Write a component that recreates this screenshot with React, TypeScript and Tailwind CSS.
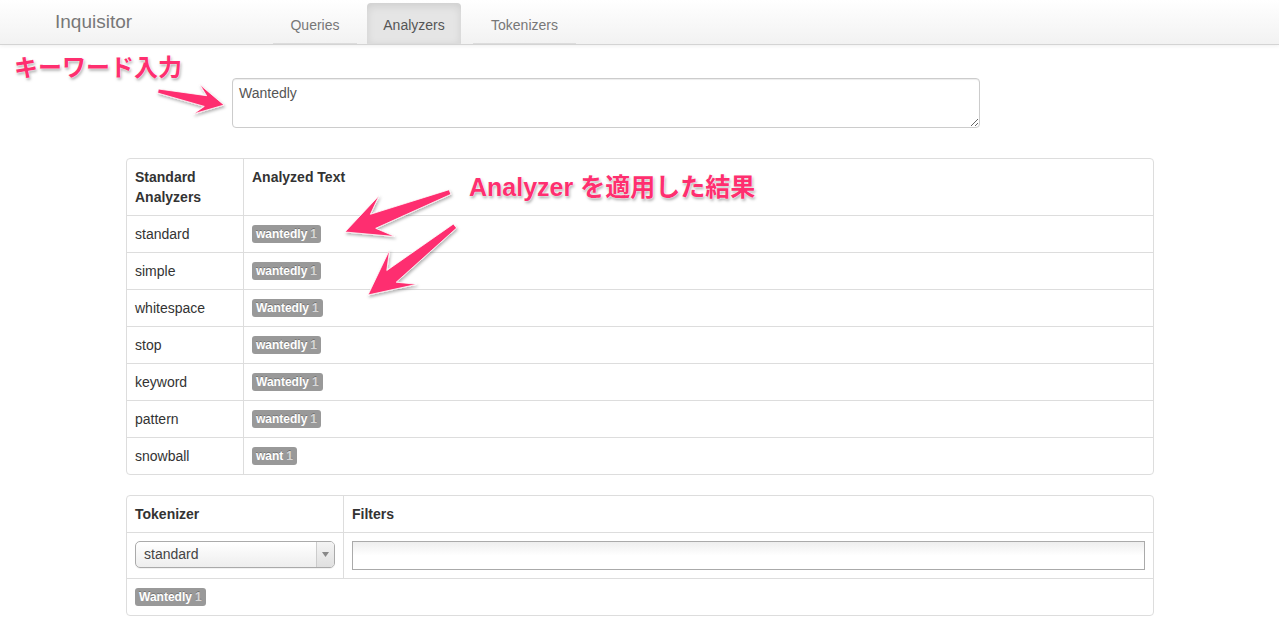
import React from "react";

const PINK = "#fe2f6f";

function arrowPoints(
  x1: number,
  y1: number,
  x2: number,
  y2: number,
  hl: number,
  hw: number,
  nb: number,
  sw: number,
  tw: number
) {
  const dx = x2 - x1;
  const dy = y2 - y1;
  const L = Math.hypot(dx, dy);
  const ux = dx / L;
  const uy = dy / L;
  const nx = -uy;
  const ny = ux;
  const p = (a: number, b: number) =>
    `${(x1 + ux * a + nx * b).toFixed(1)},${(y1 + uy * a + ny * b).toFixed(1)}`;
  return [
    p(0, -tw),
    p(L - nb, -sw),
    p(L - hl, -hw),
    p(L, 0),
    p(L - hl, hw),
    p(L - nb, sw),
    p(0, tw),
  ].join(" ");
}

function Label({ text }: { text: string }) {
  return (
    <span className="inline-flex items-center h-[18px] px-[4px] rounded-[3px] bg-[#999999] text-white font-bold text-[12px] leading-[14px] [text-shadow:0_-1px_0_rgba(0,0,0,0.25)]">
      {text}
      <span className="ml-[3px] text-[#d6d6d6]">1</span>
    </span>
  );
}

const rows: [string, string][] = [
  ["standard", "wantedly"],
  ["simple", "wantedly"],
  ["whitespace", "Wantedly"],
  ["stop", "wantedly"],
  ["keyword", "Wantedly"],
  ["pattern", "wantedly"],
  ["snowball", "want"],
];

export default function App() {
  return (
    <div className="relative min-h-[631px] bg-white text-[#333333] font-['Liberation_Sans','Noto_Sans_CJK_JP',sans-serif] text-[14px] leading-[20px]">
      {/* Navbar */}
      <div className="h-[45px] border-b border-[#d4d4d4] bg-gradient-to-b from-white to-[#f2f2f2] shadow-[0_1px_4px_rgba(0,0,0,0.065)] flex items-start pl-[55px]">
        <div className="w-[218px] mt-[12px] text-[19px] leading-[20px] text-[#777777]">
          Inquisitor
        </div>
        <div className="flex items-start">
          <div className="mt-[3px] h-[41px] w-[84px] pt-[12px] text-center text-[#777777] border-b border-[#dcdcdc] mr-[10px]">
            Queries
          </div>
          <div className="mt-[3px] h-[41px] w-[94px] pt-[12px] text-center text-[#555555] bg-[#e5e5e5] rounded-t-[4px] shadow-[inset_0_3px_8px_rgba(0,0,0,0.1)] border-b border-[#dcdcdc] mr-[12px]">
            Analyzers
          </div>
          <div className="mt-[3px] h-[41px] w-[103px] pt-[12px] text-center text-[#777777] border-b border-[#dcdcdc]">
            Tokenizers
          </div>
        </div>
      </div>

      {/* Keyword textarea */}
      <textarea
        defaultValue="Wantedly"
        className="block mt-[33px] ml-[232px] w-[748px] h-[50px] border border-[#cccccc] rounded-[4px] shadow-[inset_0_1px_1px_rgba(0,0,0,0.075)] px-[6px] py-[4px] text-[14px] leading-[20px] text-[#555555] outline-none font-['Liberation_Sans',sans-serif]"
      />

      {/* Standard analyzers table */}
      <div className="mt-[30px] ml-[126px] w-[1028px] border border-[#dddddd] rounded-[4px]">
        <div className="flex font-bold">
          <div className="w-[116px] p-2">Standard Analyzers</div>
          <div className="flex-1 border-l border-[#dddddd] p-2">Analyzed Text</div>
        </div>
        {rows.map(([name, tok]) => (
          <div key={name} className="flex border-t border-[#dddddd]">
            <div className="w-[116px] p-2">{name}</div>
            <div className="flex-1 border-l border-[#dddddd] px-2 py-2 flex items-center">
              <Label text={tok} />
            </div>
          </div>
        ))}
      </div>

      {/* Custom tokenizer table */}
      <div className="mt-[20px] ml-[126px] w-[1028px] border border-[#dddddd] rounded-[4px]">
        <div className="flex font-bold">
          <div className="w-[216px] p-2">Tokenizer</div>
          <div className="flex-1 border-l border-[#dddddd] p-2">Filters</div>
        </div>
        <div className="flex border-t border-[#dddddd]">
          <div className="w-[216px] p-2">
            <div className="flex h-[27px] w-full border border-[#aaaaaa] rounded-[5px] bg-gradient-to-b from-white to-[#eeeeee] overflow-hidden shadow-[0_1px_0_rgba(0,0,0,0.05)]">
              <div className="flex-1 pl-[8px] leading-[25px] text-[#444444]">standard</div>
              <div className="w-[18px] border-l border-[#cccccc] bg-gradient-to-b from-[#f4f4f4] to-[#e0e0e0] flex items-center justify-center">
                <svg width="7" height="5" viewBox="0 0 7 5">
                  <polygon points="0,0 7,0 3.5,5" fill="#888888" />
                </svg>
              </div>
            </div>
          </div>
          <div className="flex-1 border-l border-[#dddddd] p-2">
            <div className="h-[29px] w-full border border-[#aaaaaa] bg-gradient-to-b from-[#eeeeee] via-white to-white" />
          </div>
        </div>
        <div className="border-t border-[#dddddd] px-2 py-2 flex items-center h-[37px]">
          <Label text="Wantedly" />
        </div>
      </div>

      {/* Annotations */}
      <svg className="absolute left-0 top-0 pointer-events-none" width="1279" height="631">
        <defs>
          <filter id="sh" x="-20%" y="-20%" width="140%" height="140%">
            <feDropShadow dx="1" dy="2" stdDeviation="1.5" floodColor="#000000" floodOpacity="0.3" />
          </filter>
        </defs>
        <polygon
          points={arrowPoints(158, 91, 224, 105, 28, 15, 19, 5.5, 2)}
          fill={PINK}
          stroke="#ffffff"
          strokeWidth="0.8"
          strokeLinejoin="round"
          filter="url(#sh)"
        />
        <polygon
          points={arrowPoints(450, 192, 345, 232, 45, 22, 30, 7.5, 2.5)}
          fill={PINK}
          stroke="#ffffff"
          strokeWidth="0.8"
          strokeLinejoin="round"
          filter="url(#sh)"
        />
        <polygon
          points={arrowPoints(455, 226, 368, 295, 45, 22, 30, 7.5, 2.5)}
          fill={PINK}
          stroke="#ffffff"
          strokeWidth="0.8"
          strokeLinejoin="round"
          filter="url(#sh)"
        />
      </svg>
      <div
        className="absolute left-[14px] top-[56px] text-[24px] leading-[24px] font-bold text-[#fe2f6f] whitespace-nowrap font-['Liberation_Sans','Noto_Sans_CJK_JP',sans-serif] [text-shadow:0_0_1px_#fff,0_0_2px_#fff,1px_2px_3px_rgba(0,0,0,0.35)]"
      >
        キーワード入力
      </div>
      <div
        className="absolute left-[469px] top-[175px] text-[25px] leading-[25px] font-bold text-[#fe2f6f] whitespace-nowrap font-['Liberation_Sans','Noto_Sans_CJK_JP',sans-serif] [text-shadow:0_0_1px_#fff,0_0_2px_#fff,1px_2px_3px_rgba(0,0,0,0.35)]"
      >
        Analyzer を適用した結果
      </div>
    </div>
  );
}
